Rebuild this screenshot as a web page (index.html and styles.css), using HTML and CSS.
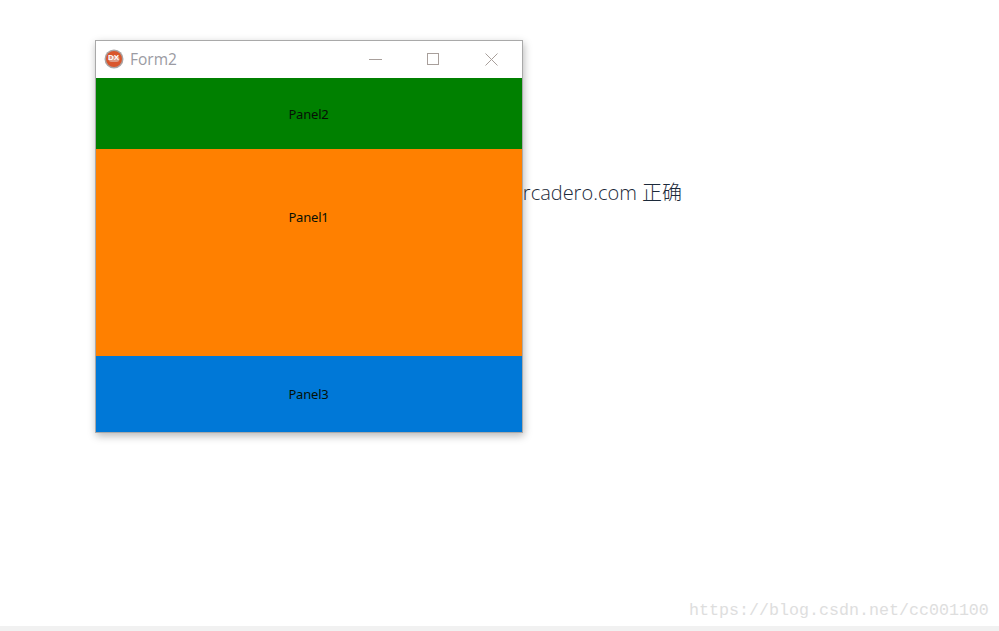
FILE: index.html
```html
<!DOCTYPE html>
<html lang="zh">
<head>
<meta charset="utf-8">
<title>Form2</title>
<link rel="stylesheet" href="styles.css">
</head>
<body>
<main class="desktop">
  <p class="behind">Embarcadero.com 正确</p>
  <section class="window">
    <header class="titlebar">
      <svg class="app-icon" width="20" height="20" viewBox="0 0 20 20" aria-hidden="true">
        <circle cx="10" cy="10" r="9.5" fill="#a9a3a3"/>
        <circle cx="10" cy="10" r="8" fill="#d9562c"/>
        <rect x="4.5" y="7" width="11" height="6" rx="3" fill="#dd9a84"/>
      </svg>
      <span class="app-mark">DX</span>
      <span class="title">Form2</span>
      <div class="controls">
        <svg class="control" width="58" height="14" viewBox="0 0 58 14" aria-hidden="true"><path d="M23 7.5H36" stroke="#a89f9b" fill="none"/></svg>
        <svg class="control" width="58" height="14" viewBox="0 0 58 14" aria-hidden="true"><rect x="23.5" y="1.5" width="11" height="11" stroke="#a89f9b" fill="none"/></svg>
        <svg class="control" width="58" height="14" viewBox="0 0 58 14" aria-hidden="true"><path d="M23.5 1.5L35.5 13.5M35.5 1.5L23.5 13.5" stroke="#a89f9b" fill="none"/></svg>
      </div>
    </header>
    <div class="panel panel-green"><span class="caption caption-2">Panel2</span></div>
    <div class="panel panel-orange"><span class="caption caption-1">Panel1</span></div>
    <div class="panel panel-blue"><span class="caption caption-3">Panel3</span></div>
  </section>
  <p class="watermark">https://blog.csdn.net/cc001100</p>
  <div class="bottom-bar"></div>
</main>
</body>
</html>
```
FILE: styles.css
```css
* { box-sizing: border-box; }
html, body { margin: 0; height: 100%; overflow: hidden; background: #fff; }

.desktop {
  position: relative;
  width: 999px;
  height: 631px;
  overflow: hidden;
  font-family: "Open Sans", "Noto Sans CJK SC", sans-serif;
}

.behind {
  position: absolute;
  right: 317px;
  top: 180px;
  margin: 0;
  font: 300 20px/26px "Open Sans", "Noto Sans CJK SC", sans-serif;
  color: #1c2a3a;
  white-space: nowrap;
}

.window {
  position: absolute;
  left: 95px;
  top: 40px;
  width: 428px;
  height: 393px;
  display: flex;
  flex-direction: column;
  border: 1px solid #a9a9a9;
  background: #fff;
  box-shadow: 1px 3px 8px rgba(0, 0, 0, 0.28);
}

.titlebar {
  position: relative;
  flex: 0 0 37px;
  display: flex;
  align-items: center;
  padding-left: 8px;
}

.app-icon { flex: none; margin-bottom: 1px; }

.app-mark {
  position: absolute;
  left: 12px;
  top: 12px;
  font: 700 8px/10px "Liberation Sans", sans-serif;
  color: #fff;
}

.title {
  margin-left: 6px;
  margin-bottom: 2px;
  font: 400 15.5px/20px "Open Sans", sans-serif;
  color: #9b9ba3;
}

.controls {
  margin-left: auto;
  margin-right: 2px;
  margin-bottom: 2px;
  display: flex;
  align-items: center;
}

.control { flex: none; display: block; }

.panel {
  display: flex;
  justify-content: center;
  padding-right: 1px;
}

.panel-green { flex: 0 0 71px; background: #008000; }
.panel-orange { flex: 0 0 207px; background: #ff8000; }
.panel-blue { flex: 1 1 0; background: #0078d7; }

.caption {
  font: 400 13px/16px "Noto Sans", "Open Sans", sans-serif;
  color: #061006;
  letter-spacing: -0.2px;
}

.caption-2 { margin-top: 28px; }
.caption-1 { margin-top: 60px; }
.caption-3 { margin-top: 30px; }

.watermark {
  position: absolute;
  left: 689px;
  top: 601px;
  margin: 0;
  font: 400 16.67px/20px "Liberation Mono", monospace;
  color: #dedede;
  white-space: nowrap;
}

.bottom-bar {
  position: absolute;
  left: 0;
  right: 0;
  bottom: 0;
  height: 5px;
  background: #f1f1f1;
}
```
